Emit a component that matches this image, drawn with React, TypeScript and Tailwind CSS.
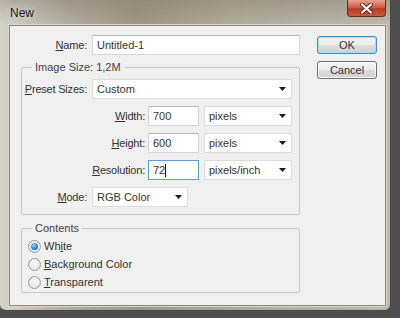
import React from "react";

const font = "font-['Liberation_Sans',Arial,sans-serif]";

function Arrow() {
  return (
    <svg width="7" height="4" viewBox="0 0 7 4" className="shrink-0">
      <path d="M0 0H7L3.5 4Z" fill="#1a1a1a" />
    </svg>
  );
}

function TextBox({ value, w, focused, caret }: { value: string; w: string; focused?: boolean; caret?: boolean }) {
  return (
    <div
      className={`${w} h-[20px] bg-white border flex items-center pl-[4px] ${
        focused ? "border-[#5b9ed6]" : "border-[#d3d6db] border-t-[#b4b7bd]"
      }`}
    >
      <span>{value}</span>
      {caret && <span className="w-px h-[13px] bg-[#111]" />}
    </div>
  );
}

function Select({ value, w }: { value: string; w: string }) {
  return (
    <div className={`${w} h-[20px] bg-white border border-[#dcdcdc] flex items-center justify-between pl-[4px] pr-[5px]`}>
      <span>{value}</span>
      <Arrow />
    </div>
  );
}

function Label({ children, w }: { children: React.ReactNode; w: string }) {
  return <div className={`${w} text-right shrink-0 tracking-[-0.2px]`}>{children}</div>;
}

function Radio({ checked, children }: { checked?: boolean; children: React.ReactNode }) {
  return (
    <div className="h-[18px] flex items-center gap-[3px] pl-[6px]">
      <div className="w-[13px] h-[13px] rounded-full border border-[#9a9da1] bg-[radial-gradient(circle_at_50%_40%,#fafafa_0%,#e6e6e6_70%,#d4d4d4_100%)] flex items-center justify-center">
        {checked && (
          <div className="w-[7px] h-[7px] rounded-full bg-[radial-gradient(circle_at_40%_35%,#8fd3ff_0%,#2c8ad2_55%,#124f86_100%)]" />
        )}
      </div>
      <span>{children}</span>
    </div>
  );
}

function Btn({ children, focused }: { children: React.ReactNode; focused?: boolean }) {
  return (
    <div
      className={`w-[60px] h-[18px] rounded-[3px] border flex items-center justify-center text-[#333] bg-[linear-gradient(180deg,#f4f4f4_0%,#ebebeb_50%,#dddddd_51%,#d0d0d0_100%)] ${
        focused ? "border-[#3c8fce] shadow-[inset_0_0_0_1px_#a9dcf6]" : "border-[#707070] shadow-[inset_0_0_0_1px_#fbfbfb]"
      }`}
    >
      {children}
    </div>
  );
}

export default function App() {
  return (
    <div className={`w-[400px] h-[318px] bg-[#505050] overflow-hidden ${font} text-[11px] leading-[13px] text-[#333333]`}>
      <div className="w-[391px] h-[311px] rounded-b-[6px] border-r border-b border-[#4a463e] bg-[linear-gradient(180deg,rgba(120,112,96,0.35)_0px,rgba(0,0,0,0)_24px),linear-gradient(90deg,#d6d3cb_0%,#b2ac9e_18%,#9e9787_35%,#b1ab9c_60%,#bdb8ab_100%)] flex flex-col">
        {/* title bar */}
        <div className="h-[25px] flex items-start justify-between pl-[10px] pr-[4px] shrink-0">
          <div className="pt-[6px] text-[12px] leading-[14px] text-[#1c1c1c] [text-shadow:0_0_6px_rgba(255,255,255,0.8)]">New</div>
          <div className="w-[39px] h-[17px] rounded-b-[4px] border border-t-0 border-[#6e2a1c] bg-[linear-gradient(180deg,#e8a08c_0%,#d0604a_45%,#b83a22_55%,#c85a3c_100%)] flex items-center justify-center">
            <svg width="13" height="11" viewBox="0 0 13 11">
              <path d="M2 1.5L11 9.5M11 1.5L2 9.5" stroke="#5a2a20" strokeWidth="4" strokeLinecap="round" />
              <path d="M2 1.5L11 9.5M11 1.5L2 9.5" stroke="#ffffff" strokeWidth="2.2" strokeLinecap="round" />
            </svg>
          </div>
        </div>
        {/* client area */}
        <div className="ml-[9px] mr-[4px] h-[281px] bg-[#f0f0f0] border border-[#8d887a] shadow-[0_0_0_1px_#d9d5cb] pl-[11px] pt-[9px] flex gap-[17px]">
          <div className="w-[279px] flex flex-col">
            <div className="flex items-center gap-[5px] h-[20px]">
              <Label w="w-[66px]"><u>N</u>ame:</Label>
              <TextBox value="Untitled-1" w="w-[208px]" />
            </div>
            <fieldset className="mt-[5px] border border-[#c9c9c9] rounded-[2px] pb-[7px]">
              <legend className="ml-[10px] px-[3px] leading-[14px] text-[#444]">Image Size: 1,2M</legend>
              <div className="flex flex-col gap-[7px] pt-[5px]">
                <div className="flex items-center gap-[5px]">
                  <Label w="w-[65px]"><u>P</u>reset Sizes:</Label>
                  <Select value="Custom" w="w-[200px]" />
                </div>
                <div className="flex items-center">
                  <Label w="w-[123px]"><u>W</u>idth:</Label>
                  <div className="ml-[3px]"><TextBox value="700" w="w-[51px]" /></div>
                  <div className="ml-[5px]"><Select value="pixels" w="w-[88px]" /></div>
                </div>
                <div className="flex items-center">
                  <Label w="w-[123px]"><u>H</u>eight:</Label>
                  <div className="ml-[3px]"><TextBox value="600" w="w-[51px]" /></div>
                  <div className="ml-[5px]"><Select value="pixels" w="w-[88px]" /></div>
                </div>
                <div className="flex items-center">
                  <Label w="w-[123px]"><u>R</u>esolution:</Label>
                  <div className="ml-[3px]"><TextBox value="72" w="w-[51px]" focused caret /></div>
                  <div className="ml-[5px]"><Select value="pixels/inch" w="w-[88px]" /></div>
                </div>
                <div className="flex items-center gap-[5px]">
                  <Label w="w-[65px]"><u>M</u>ode:</Label>
                  <Select value="RGB Color" w="w-[96px]" />
                </div>
              </div>
            </fieldset>
            <fieldset className="mt-[6px] border border-[#c9c9c9] rounded-[2px] pb-[1px]">
              <legend className="ml-[10px] px-[3px] leading-[14px] text-[#444]">Contents</legend>
              <div className="pt-[2px] flex flex-col">
                <Radio checked>Wh<u>i</u>te</Radio>
                <Radio><u>B</u>ackground Color</Radio>
                <Radio><u>T</u>ransparent</Radio>
              </div>
            </fieldset>
          </div>
          <div className="w-[60px] flex flex-col pt-[1px] gap-[7px]">
            <Btn focused>OK</Btn>
            <Btn>Cancel</Btn>
          </div>
        </div>
      </div>
    </div>
  );
}
